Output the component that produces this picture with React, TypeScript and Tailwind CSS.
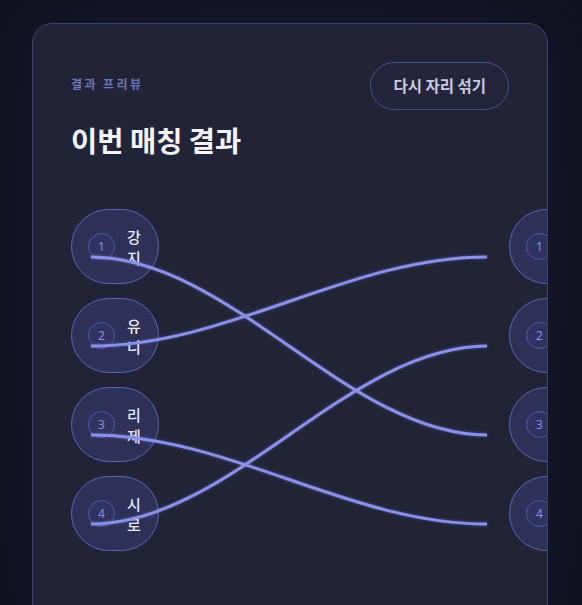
import React from "react";

const left = [
  { n: 1, name: "강지" },
  { n: 2, name: "유니" },
  { n: 3, name: "리제" },
  { n: 4, name: "시로" },
];
const right = [1, 2, 3, 4];
const links: [number, number][] = [
  [0, 2],
  [1, 0],
  [2, 3],
  [3, 1],
];

function Node({ n, name }: { n: number; name?: string }) {
  return (
    <div className="flex h-[75px] w-[88px] shrink-0 items-center rounded-full border border-[#5d63b8] bg-[#2d3057] pl-[16px]">
      <div className="flex h-[27px] w-[27px] shrink-0 items-center justify-center rounded-full border border-[#5358ad] bg-[#30335f] text-[12px] text-[#858cf2] [font-family:'Noto_Sans',sans-serif]">
        {n}
      </div>
      {name && (
        <div className="ml-[12px] w-[17px] break-all text-[15px] font-medium leading-[21px] text-[#e9eaf4]">
          {name}
        </div>
      )}
    </div>
  );
}

export default function App() {
  const x0 = 20;
  const x1 = 416;
  const c = 0.35 * (x1 - x0);
  const y = (i: number) => 48 + i * 89;
  return (
    <div className="min-h-[605px] overflow-hidden bg-[radial-gradient(ellipse_at_50%_40%,#171b2b_0%,#10141f_70%,#0e111c_100%)] pt-[23px] pl-[32px] [font-family:'Noto_Sans_CJK_KR','Noto_Sans',sans-serif]">
      <div className="w-[516px] overflow-hidden rounded-[20px] border border-[#3d4170] bg-[#212337] px-[38px] pt-[38px] pb-[80px] shadow-[0_0_60px_rgba(20,24,48,0.8)]">
        <div className="flex items-start justify-between">
          <div>
            <div className="mt-[14px] text-[12px] font-bold leading-[16px] tracking-[2.4px] text-[#6e75bd]">
              결과 프리뷰
            </div>
            <h1 className="mt-[30px] text-[28.5px] font-bold leading-[36px] text-[#f4f4f8]">
              이번 매칭 결과
            </h1>
          </div>
          <button className="h-[48px] rounded-full border border-[#4a4f8c] bg-[#23253d] px-[22px] text-[15.5px] font-bold text-[#c9cbe0]">
            다시 자리 섞기
          </button>
        </div>
        <div className="relative mt-[51px] flex justify-between">
          <div className="flex flex-col gap-[14px]">
            {left.map((p) => (
              <Node key={p.n} n={p.n} name={p.name} />
            ))}
          </div>
          <div className="mr-[-88px] flex flex-col gap-[14px]">
            {right.map((n) => (
              <Node key={n} n={n} />
            ))}
          </div>
          <svg
            className="pointer-events-none absolute left-0 top-0"
            width="438"
            height="342"
            viewBox="0 0 438 342"
          >
            <defs>
              <filter id="glow" x="-10%" y="-10%" width="120%" height="120%">
                <feGaussianBlur stdDeviation="1.5" result="b" />
                <feComponentTransfer in="b" result="bb">
                  <feFuncA type="linear" slope="0.45" />
                </feComponentTransfer>
                <feMerge>
                  <feMergeNode in="bb" />
                  <feMergeNode in="SourceGraphic" />
                </feMerge>
              </filter>
            </defs>
            {links.map(([a, b], i) => (
              <path
                key={i}
                d={`M ${x0} ${y(a)} C ${x0 + c} ${y(a)}, ${x1 - c} ${y(b)}, ${x1} ${y(b)}`}
                fill="none"
                stroke="#8a90ec"
                strokeWidth="3"
                strokeLinecap="butt"
                filter="url(#glow)"
              />
            ))}
          </svg>
        </div>
      </div>
    </div>
  );
}
